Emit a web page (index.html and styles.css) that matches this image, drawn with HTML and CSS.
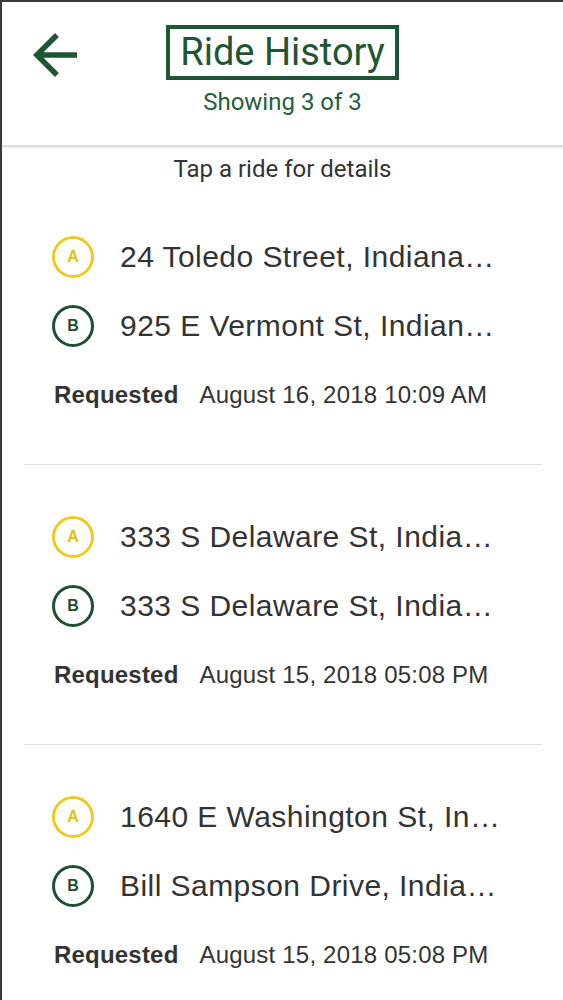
FILE: index.html
```html
<!DOCTYPE html>
<html lang="en">
<head>
    <meta charset="UTF-8">
    <meta name="viewport" content="width=device-width, initial-scale=1.0">
    <title>Ride History</title>
    <link rel="stylesheet" href="styles.css">
</head>
<body>
    <div class="screen">
        <div class="header">
            <button class="back" aria-label="Back">
                <svg viewBox="4 4 16 16" width="44" height="44">
                    <path d="M20 11H7.83l5.59-5.59L12 4l-8 8 8 8 1.41-1.41L7.83 13H20v-2z" fill="#1d5632"/>
                </svg>
            </button>
            <div class="titles">
                <h1 class="title">Ride History</h1>
                <div class="count">Showing 3 of 3</div>
            </div>
        </div>

        <p class="hint">Tap a ride for details</p>

        <div class="ride">
            <div class="row">
                <span class="pin pin-a">A</span>
                <span class="addr">24 Toledo Street, Indiana…</span>
            </div>
            <div class="row">
                <span class="pin pin-b">B</span>
                <span class="addr">925 E Vermont St, Indian…</span>
            </div>
            <div class="row req">
                <span class="label">Requested</span>
                <span class="date">August 16, 2018 10:09 AM</span>
            </div>
        </div>

        <div class="ride">
            <div class="row">
                <span class="pin pin-a">A</span>
                <span class="addr">333 S Delaware St, India…</span>
            </div>
            <div class="row">
                <span class="pin pin-b">B</span>
                <span class="addr">333 S Delaware St, India…</span>
            </div>
            <div class="row req">
                <span class="label">Requested</span>
                <span class="date">August 15, 2018 05:08 PM</span>
            </div>
        </div>

        <div class="ride">
            <div class="row">
                <span class="pin pin-a">A</span>
                <span class="addr">1640 E Washington St, In…</span>
            </div>
            <div class="row">
                <span class="pin pin-b">B</span>
                <span class="addr">Bill Sampson Drive, India…</span>
            </div>
            <div class="row req">
                <span class="label">Requested</span>
                <span class="date">August 15, 2018 05:08 PM</span>
            </div>
        </div>
    </div>
</body>
</html>
```

FILE: styles.css
```css
*{
    margin: 0;
    padding: 0;
    box-sizing: border-box;
}
body{
    background: #fff;
    font-family: "Liberation Sans", Arial, sans-serif;
    color: #333;
}
.screen{
    min-height: 1000px;
    border-top: 2px solid #3a3a3a;
    border-left: 2px solid #3a3a3a;
}
.header{
    height: 145px;
    display: grid;
    grid-template-columns: 1fr auto 1fr;
    border-bottom: 2px solid #dcdcdc;
    box-shadow: 0 1px 2px rgba(0, 0, 0, 0.08);
}
.back{
    justify-self: start;
    align-self: start;
    margin: 31px 0 0 31px;
    background: none;
    border: none;
    width: 44px;
    height: 44px;
}
.back svg{
    display: block;
}
.titles{
    display: flex;
    flex-direction: column;
    align-items: center;
    padding-top: 23px;
    font-family: Roboto, sans-serif;
    color: #1d5632;
}
.title{
    border: 4px solid #1d5632;
    padding: 0 10px;
    font-size: 38px;
    font-weight: 400;
    line-height: 47px;
}
.count{
    margin-top: 8px;
    font-size: 24px;
    line-height: 28px;
    color: #22603a;
}
.hint{
    margin-top: 8px;
    margin-bottom: 2px;
    text-align: center;
    font-family: Roboto, sans-serif;
    font-size: 24px;
    line-height: 28px;
    color: #333;
}
.ride{
    margin: 0 21px 0 22px;
    padding: 37px 20px 34px 28px;
    border-bottom: 1px solid #dedede;
}
.ride:last-child{
    border-bottom: none;
}
.row{
    height: 69px;
    display: flex;
    align-items: center;
    gap: 26px;
}
.row.req{
    height: 70px;
    gap: 21px;
    padding-left: 2px;
    font-size: 24px;
    letter-spacing: 0.2px;
}
.pin{
    flex: none;
    width: 42px;
    height: 42px;
    border-radius: 50%;
    border: 3px solid;
    display: flex;
    justify-content: center;
    align-items: center;
    font-size: 16px;
    font-weight: 700;
}
.pin-a{
    border-color: #efcb22;
    color: #e6bd12;
}
.pin-b{
    border-color: #1f4f2e;
    color: #1f4f2e;
}
.addr{
    flex: 1;
    min-width: 0;
    font-size: 30px;
    letter-spacing: 0.45px;
    white-space: nowrap;
}
.label{
    font-weight: 700;
}
```
